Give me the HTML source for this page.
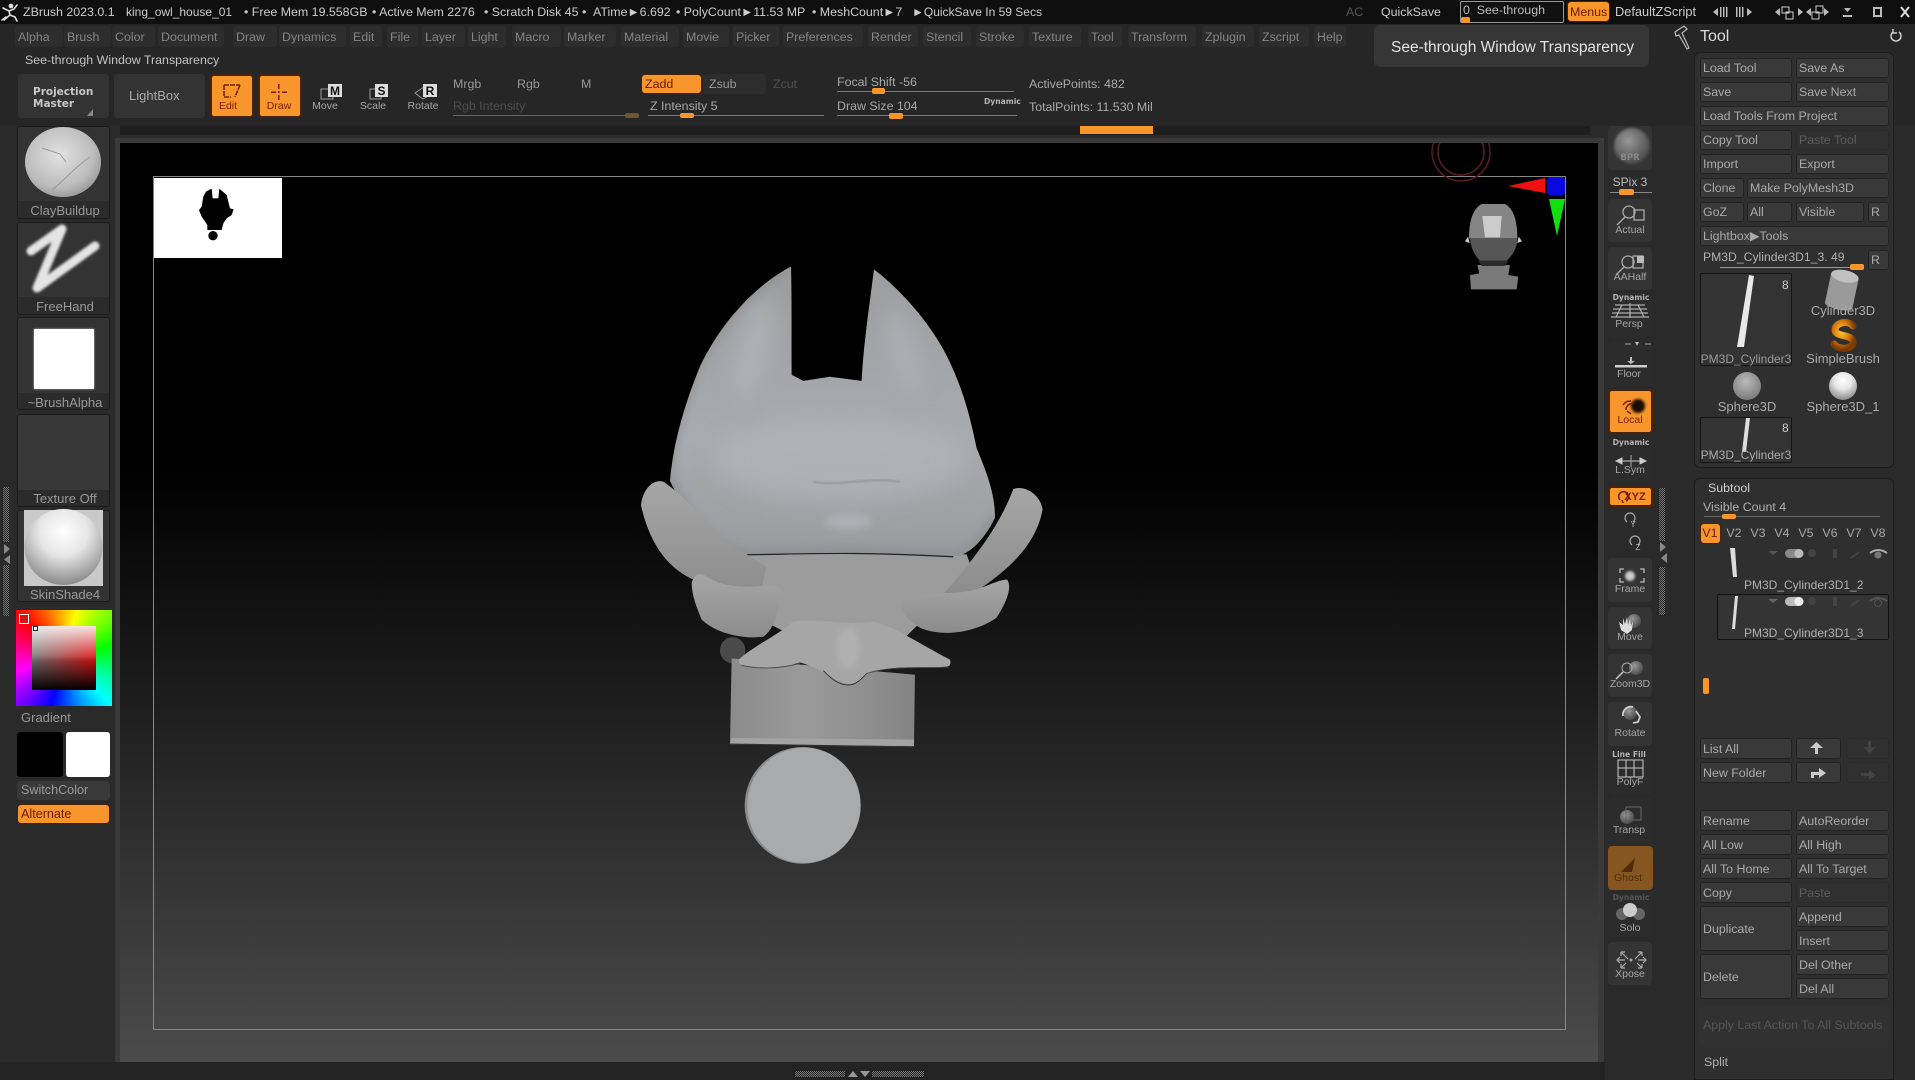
<!DOCTYPE html>
<html><head><meta charset="utf-8"><title>ZBrush</title>
<style>
html,body{margin:0;padding:0;background:#282828}
#r{position:relative;width:1915px;height:1080px;overflow:hidden;background:#2a2a2a;font:12.4px "Liberation Sans",sans-serif;color:#a8a8a8}
#r div{position:absolute;box-sizing:border-box}
.t{position:absolute;white-space:pre;line-height:16px;margin-top:-8px;z-index:2}
.c{transform:translateX(-50%)}
.b{background:#393939;border:1px solid #222;border-radius:3px;color:#aaa;display:flex;align-items:center;padding-left:2px;white-space:pre;line-height:16px}
.d{background:#303030;border-color:#2a2a2a;color:#5c5c5c}
.m{background:#2d2d2d;height:21px;top:26px;border-radius:3px;color:#858585;display:flex;align-items:center;padding-left:3px;white-space:pre}
.o{background:#f8952b;border:2px solid #4a2205;border-radius:4px;color:#7a1c00}
.s{background:#343434;border-radius:4px;width:44px;left:1608px}
.n{background:#2c2c2c;border-radius:4px;width:44px;left:1608px}
.l{color:#a6a6a6;font-size:10.5px}
.th{background:#333;border:1px solid #1a1a1a;border-radius:3px;left:17px;width:93px}
.lb{color:#999;font-size:13px}
.q{background-color:#333;background-image:repeating-conic-gradient(#777 0 25%,#222 0 50%);background-size:2px 2px}
.bd{font:bold 7.6px "DejaVu Sans",sans-serif;line-height:16px;color:#b5b5b5}
.k{font-weight:bold;font-size:12px;color:#111}
#ov{position:absolute;left:0;top:0;z-index:1}
</style></head><body><div id="r">

<!-- bars -->
<div style="left:0;top:0;width:1915px;height:24px;background:#0f0f0f"></div>
<div style="left:0;top:24px;width:1915px;height:102px;background:#262626"></div>

<span class="t" style="left:23px;top:12px;color:#ccc">ZBrush 2023.0.1</span>
<span class="t" style="left:126px;top:12px;color:#ccc;font-size:12px">king_owl_house_01</span>
<span class="t" style="left:244px;top:12px;color:#ccc">• Free Mem 19.558GB</span>
<span class="t" style="left:372px;top:12px;color:#ccc">• Active Mem 2276</span>
<span class="t" style="left:484px;top:12px;color:#ccc">• Scratch Disk 45 •</span>
<span class="t" style="left:593px;top:12px;color:#ccc">ATime►6.692</span>
<span class="t" style="left:676px;top:12px;color:#ccc">• PolyCount►11.53 MP</span>
<span class="t" style="left:812px;top:12px;color:#ccc">• MeshCount►7</span>
<span class="t" style="left:912px;top:12px;color:#ccc;font-size:12px">►QuickSave In 59 Secs</span>
<span class="t" style="left:1346px;top:12px;color:#555">AC</span>
<span class="t" style="left:1381px;top:12px;color:#ccc">QuickSave</span>
<div style="left:1460px;top:1px;width:104px;height:22px;border:1px solid #999;border-radius:2px;background:#111"></div>
<div style="left:1461px;top:17px;width:9px;height:6px;background:#f8952b;border-radius:2px"></div>
<span class="t" style="left:1463px;top:10px;color:#bbb">0  See-through</span>
<div class="o" style="left:1567px;top:1px;width:43px;height:21px;border-width:1px"></div>
<span class="t" style="left:1570px;top:12px;color:#6b1a00">Menus</span>
<span class="t" style="left:1615px;top:12px;color:#ccc;font-size:12.800px">DefaultZScript</span>

<!-- menu -->
<div class="m" style="left:15px;width:48px">Alpha</div>
<div class="m" style="left:64px;width:47px">Brush</div>
<div class="m" style="left:112px;width:43px">Color</div>
<div class="m" style="left:158px;width:66px">Document</div>
<div class="m" style="left:233px;width:44px">Draw</div>
<div class="m" style="left:279px;width:67px">Dynamics</div>
<div class="m" style="left:350px;width:32px">Edit</div>
<div class="m" style="left:387px;width:31px">File</div>
<div class="m" style="left:422px;width:43px">Layer</div>
<div class="m" style="left:468px;width:38px">Light</div>
<div class="m" style="left:512px;width:49px">Macro</div>
<div class="m" style="left:564px;width:52px">Marker</div>
<div class="m" style="left:621px;width:58px">Material</div>
<div class="m" style="left:683px;width:46px">Movie</div>
<div class="m" style="left:733px;width:46px">Picker</div>
<div class="m" style="left:783px;width:80px">Preferences</div>
<div class="m" style="left:868px;width:50px">Render</div>
<div class="m" style="left:923px;width:48px">Stencil</div>
<div class="m" style="left:976px;width:48px">Stroke</div>
<div class="m" style="left:1029px;width:52px">Texture</div>
<div class="m" style="left:1088px;width:34px">Tool</div>
<div class="m" style="left:1128px;width:68px">Transform</div>
<div class="m" style="left:1202px;width:52px">Zplugin</div>
<div class="m" style="left:1259px;width:50px">Zscript</div>
<div class="m" style="left:1314px;width:32px">Help</div>

<span class="t" style="left:25px;top:60px;color:#c4c4c4">See-through Window Transparency</span>

<!-- tooltip -->
<div style="left:1374px;top:25px;width:275px;height:42px;background:#363636;border-radius:6px"></div>
<span class="t" style="left:1391px;top:48px;font-size:15.500px;color:#e2e2e2">See-through Window Transparency</span>

<!-- Tool title -->
<span class="t" style="left:1700px;top:36.500px;font-size:16px;color:#dcdcdc">Tool</span>

<!-- top tools -->
<div style="left:18px;top:74px;width:91px;height:44px;background:#333;border-radius:4px"></div>
<span class="t bd" style="left:33px;top:92px;font-size:10.500px;color:#c8c8c8">Projection</span>
<span class="t bd" style="left:33px;top:104px;font-size:10.500px;color:#c8c8c8">Master</span>
<div style="left:114px;top:74px;width:91px;height:44px;background:#333;border-radius:4px"></div>
<span class="t" style="left:129px;top:96px;color:#aaa;font-size:13px">LightBox</span>
<div class="o" style="left:210px;top:74px;width:44px;height:44px"></div>
<div class="o" style="left:258px;top:74px;width:44px;height:44px"></div>
<span class="t c" style="left:228px;top:106px;font-size:10.500px;color:#7a1c00">Edit</span>
<span class="t c" style="left:279px;top:106px;font-size:10.500px;color:#7a1c00">Draw</span>
<span class="t c l" style="left:325px;top:106px">Move</span>
<span class="t c l" style="left:373px;top:106px">Scale</span>
<span class="t c l" style="left:423px;top:106px">Rotate</span>
<span class="t c k" style="left:335px;top:90.500px">M</span>
<span class="t c k" style="left:381.500px;top:90.500px">S</span>
<span class="t c k" style="left:430px;top:90.500px">R</span>

<span class="t" style="left:453px;top:84px;color:#999">Mrgb</span>
<span class="t" style="left:517px;top:84px;color:#999">Rgb</span>
<span class="t" style="left:581px;top:84px;color:#999">M</span>
<span class="t" style="left:453px;top:106px;color:#4c4c4c">Rgb Intensity</span>
<div style="left:453px;top:115px;width:180px;height:1px;background:#666"></div>
<div style="left:625px;top:113px;width:14px;height:5px;background:#6b5830;border-radius:2px"></div>
<div class="o" style="left:641px;top:74px;width:61px;height:20px;border-width:1px"></div>
<span class="t" style="left:645px;top:84px;color:#6b1a00">Zadd</span>
<div style="left:703px;top:74px;width:63px;height:20px;background:#2d2d2d;border-radius:3px"></div>
<span class="t" style="left:709px;top:84px;color:#999">Zsub</span>
<span class="t" style="left:773px;top:84px;color:#505050">Zcut</span>
<span class="t" style="left:650px;top:106px;color:#a8a8a8">Z Intensity 5</span>
<div style="left:648px;top:115px;width:176px;height:1px;background:#777"></div>
<div style="left:680px;top:113px;width:14px;height:5px;background:#f8952b;border-radius:2px"></div>
<span class="t" style="left:837px;top:82px;color:#a8a8a8">Focal Shift -56</span>
<div style="left:837px;top:91px;width:177px;height:1px;background:#777"></div>
<div style="left:872px;top:88px;width:13px;height:6px;background:#f8952b;border-radius:2px"></div>
<span class="t" style="left:837px;top:106px;color:#a8a8a8">Draw Size 104</span>
<div style="left:837px;top:115px;width:180px;height:1px;background:#777"></div>
<div style="left:889px;top:113px;width:14px;height:6px;background:#f8952b;border-radius:2px"></div>
<span class="t bd" style="left:984px;top:102px">Dynamic</span>
<span class="t" style="left:1029px;top:84px;color:#aaa">ActivePoints: 482</span>
<span class="t" style="left:1029px;top:107px;color:#aaa">TotalPoints: 11.530 Mil</span>

<div style="left:120px;top:126px;width:1470px;height:9px;background:#1f1f1f"></div>
<div style="left:1080px;top:126px;width:73px;height:8px;background:#f8952b"></div>

<!-- canvas -->
<div style="left:115px;top:138px;width:1489px;height:924px;background:#3a3a3a"></div>
<div style="left:120px;top:143px;width:1478px;height:919px;background:linear-gradient(#000 0,#000 324px,#4b4b4b 100%)"></div>
<div style="left:153px;top:176px;width:1413px;height:854px;border:1px solid #888"></div>
<div style="left:154px;top:178px;width:128px;height:80px;background:#fff"></div>
<div style="left:0;top:1062px;width:1605px;height:18px;background:#232323"></div>
<div class="q" style="left:795px;top:1071px;width:50px;height:6px"></div>
<div class="q" style="left:872px;top:1071px;width:52px;height:6px"></div>

<!-- left column -->
<div class="th" style="top:126px;height:93px"></div><div style="left:18px;top:201px;width:91px;height:17px;background:#2b2b2b"></div>
<div class="th" style="top:222px;height:93px"></div><div style="left:18px;top:297px;width:91px;height:17px;background:#2b2b2b"></div>
<div class="th" style="top:317px;height:93px"></div><div style="left:18px;top:393px;width:91px;height:16px;background:#2b2b2b"></div>
<div style="left:34px;top:329px;width:60px;height:60px;background:#fff;box-shadow:0 0 2px #bbb"></div>
<div class="th" style="top:414px;height:93px;background:#383838"></div><div style="left:18px;top:490px;width:91px;height:16px;background:#2b2b2b"></div>
<div class="th" style="top:510px;height:92px"></div>
<div style="left:24px;top:510px;width:79px;height:76px;background:#c9c9c9"></div>
<span class="t c lb" style="left:65px;top:210.500px">ClayBuildup</span>
<span class="t c lb" style="left:65px;top:306.500px">FreeHand</span>
<span class="t c lb" style="left:65px;top:402.500px">~BrushAlpha</span>
<span class="t c lb" style="left:65px;top:499px">Texture Off</span>
<span class="t c lb" style="left:65px;top:594.500px">SkinShade4</span>
<div style="left:16px;top:610px;width:96px;height:96px;background:conic-gradient(from 315deg,#f00 0,#ff0 60deg,#0f0 120deg,#0ff 180deg,#00f 240deg,#f0f 300deg,#f00 360deg)"></div>
<div style="left:32px;top:626px;width:64px;height:64px;background:linear-gradient(to bottom,rgba(255,255,255,.88) 0,rgba(255,255,255,0) 55%),linear-gradient(to bottom,rgba(0,0,0,0) 45%,#000 100%),linear-gradient(to right,#777,#e01010)"></div>
<div style="left:19px;top:614px;width:10px;height:10px;background:#d01818;border:1px solid #fff"></div>
<div style="left:33px;top:626px;width:5px;height:5px;background:#fff;border:1px solid #222"></div>
<span class="t lb" style="left:21px;top:718px">Gradient</span>
<div style="left:17px;top:732px;width:46px;height:45px;background:#000;border-radius:3px"></div>
<div style="left:66px;top:732px;width:44px;height:45px;background:#fff;border-radius:3px"></div>
<div style="left:17px;top:781px;width:93px;height:19px;background:#393939;border-radius:3px"></div>
<span class="t lb" style="left:21px;top:790px;font-size:12.600px">SwitchColor</span>
<div class="o" style="left:17px;top:804px;width:93px;height:20px;border-width:1px"></div>
<span class="t" style="left:21px;top:814px;color:#6b1a00;font-size:12.600px">Alternate</span>
<div class="q" style="left:3px;top:487px;width:6px;height:55px"></div>
<div class="q" style="left:3px;top:565px;width:6px;height:51px"></div>

<!-- right strip buttons -->
<div class="s" style="top:126px;height:44px"></div>
<div class="s" style="top:199px;height:43px"></div>
<div class="s" style="top:247px;height:43px"></div>
<div class="n" style="top:293px;height:45px"></div>
<div class="n" style="top:342px;height:45px"></div>
<div class="o" style="left:1608px;top:389px;width:45px;height:45px"></div>
<div class="n" style="top:448px;height:34px"></div>
<div class="o" style="left:1608px;top:486px;width:45px;height:21px"></div>
<div class="s" style="top:558px;height:44px"></div>
<div class="s" style="top:607px;height:42px"></div>
<div class="s" style="top:654px;height:43px"></div>
<div class="s" style="top:702px;height:44px"></div>
<div class="n" style="top:750px;height:44px"></div>
<div class="n" style="top:798px;height:44px"></div>
<div style="left:1608px;top:846px;width:45px;height:44px;background:#85561f;border-radius:4px"></div>
<div class="n" style="top:893px;height:44px"></div>
<div class="s" style="top:942px;height:43px"></div>
<div class="q" style="left:1659px;top:488px;width:6px;height:53px"></div>
<div class="q" style="left:1659px;top:567px;width:6px;height:48px"></div>

<span class="t c bd" style="left:1630px;top:158px;font-size:8.500px;color:#888">BPR</span>
<span class="t c" style="left:1630px;top:182px;color:#bbb;font-size:12px">SPix 3</span>
<div style="left:1610px;top:192px;width:42px;height:1px;background:#888"></div>
<div style="left:1619px;top:189px;width:15px;height:6px;background:#f8952b;border-radius:2px"></div>
<span class="t c l" style="left:1630px;top:230px">Actual</span>
<span class="t c l" style="left:1630px;top:277px">AAHalf</span>
<span class="t c bd" style="left:1631px;top:298px">Dynamic</span>
<span class="t c l" style="left:1629px;top:324px">Persp</span>
<span class="t c l" style="left:1629px;top:374px">Floor</span>
<span class="t c l" style="left:1630px;top:420px;color:#7a1c00">Local</span>
<span class="t c bd" style="left:1631px;top:443px">Dynamic</span>
<span class="t c l" style="left:1630px;top:470px">L.Sym</span>
<span class="t c" style="left:1635px;top:497px;color:#7a1c00;font-size:11px;font-weight:bold">XYZ</span>
<span class="t c" style="left:1633px;top:525px;font-size:8px;color:#bbb">Y</span>
<span class="t c" style="left:1638px;top:548px;font-size:8px;color:#bbb">Z</span>
<span class="t c l" style="left:1630px;top:589px">Frame</span>
<span class="t c l" style="left:1630px;top:637px">Move</span>
<span class="t c l" style="left:1630px;top:684px">Zoom3D</span>
<span class="t c l" style="left:1630px;top:733px">Rotate</span>
<span class="t c bd" style="left:1629px;top:755px">Line Fill</span>
<span class="t c l" style="left:1630px;top:782px">PolyF</span>
<span class="t c l" style="left:1629px;top:830px">Transp</span>
<span class="t c l" style="left:1628px;top:878px;color:#4e2c0c">Ghost</span>
<span class="t c bd" style="left:1631px;top:898px;color:#555">Dynamic</span>
<span class="t c l" style="left:1630px;top:928px">Solo</span>
<span class="t c l" style="left:1630px;top:974px">Xpose</span>

<!-- Tool panel -->
<div style="left:1694px;top:52px;width:200px;height:416px;background:#2f2f2f;border:1px solid #1d1d1d;border-radius:6px"></div>
<div class="b" style="left:1700px;top:58px;width:92px;height:20px">Load Tool</div>
<div class="b" style="left:1796px;top:58px;width:93px;height:20px">Save As</div>
<div class="b" style="left:1700px;top:82px;width:92px;height:20px">Save</div>
<div class="b" style="left:1796px;top:82px;width:93px;height:20px">Save Next</div>
<div class="b" style="left:1700px;top:106px;width:189px;height:20px">Load Tools From Project</div>
<div class="b" style="left:1700px;top:130px;width:92px;height:20px">Copy Tool</div>
<div class="b d" style="left:1796px;top:130px;width:93px;height:20px">Paste Tool</div>
<div class="b" style="left:1700px;top:154px;width:92px;height:20px">Import</div>
<div class="b" style="left:1796px;top:154px;width:93px;height:20px">Export</div>
<div class="b" style="left:1700px;top:178px;width:44px;height:20px">Clone</div>
<div class="b" style="left:1747px;top:178px;width:142px;height:20px">Make PolyMesh3D</div>
<div class="b" style="left:1700px;top:202px;width:44px;height:20px">GoZ</div>
<div class="b" style="left:1747px;top:202px;width:45px;height:20px">All</div>
<div class="b" style="left:1796px;top:202px;width:68px;height:20px">Visible</div>
<div class="b" style="left:1868px;top:202px;width:21px;height:20px">R</div>
<div class="b" style="left:1700px;top:226px;width:189px;height:20px">Lightbox▶Tools</div>
<span class="t" style="left:1703px;top:257px;color:#b0b0b0;font-size:12.200px">PM3D_Cylinder3D1_3. 49</span>
<div style="left:1720px;top:267px;width:135px;height:1px;background:#999"></div>
<div style="left:1850px;top:264px;width:14px;height:6px;background:#f8952b;border-radius:2px"></div>
<div class="b" style="left:1868px;top:250px;width:21px;height:20px">R</div>
<div style="left:1700px;top:273px;width:92px;height:93px;background:#333;border:1px solid #151515;border-radius:2px"></div>
<div style="left:1700px;top:417px;width:92px;height:46px;background:#333;border:1px solid #151515;border-radius:2px"></div>
<span class="t" style="left:1782px;top:285px;color:#ccc;font-size:12px">8</span>
<span class="t" style="left:1782px;top:428px;color:#ccc;font-size:12px">8</span>
<span class="t c" style="left:1746px;top:359px;color:#999;font-size:12px">PM3D_Cylinder3</span>
<span class="t c" style="left:1843px;top:311px;color:#aaa;font-size:13px">Cylinder3D</span>
<span class="t c" style="left:1843px;top:359px;color:#aaa;font-size:13px">SimpleBrush</span>
<span class="t c" style="left:1747px;top:407px;color:#aaa;font-size:13px">Sphere3D</span>
<span class="t c" style="left:1843px;top:407px;color:#aaa;font-size:13px">Sphere3D_1</span>
<span class="t c" style="left:1746px;top:455px;color:#aaa;font-size:12px">PM3D_Cylinder3</span>

<!-- Subtool -->
<div style="left:1694px;top:478px;width:200px;height:602px;background:#2f2f2f;border:1px solid #1d1d1d;border-radius:6px 6px 0 0"></div>
<span class="t" style="left:1708px;top:488px;color:#d0d0d0">Subtool</span>
<span class="t" style="left:1703px;top:507px;color:#b0b0b0">Visible Count 4</span>
<div style="left:1704px;top:516px;width:176px;height:1px;background:#666"></div>
<div style="left:1722px;top:514px;width:14px;height:5px;background:#f8952b;border-radius:2px"></div>
<div class="o" style="left:1700px;top:523px;width:21px;height:21px;border-width:1px"></div>
<span class="t c" style="left:1710px;top:533px;color:#6b1a00">V1</span>
<span class="t c" style="left:1734px;top:533px">V2</span>
<span class="t c" style="left:1758px;top:533px">V3</span>
<span class="t c" style="left:1782px;top:533px">V4</span>
<span class="t c" style="left:1806px;top:533px">V5</span>
<span class="t c" style="left:1830px;top:533px">V6</span>
<span class="t c" style="left:1854px;top:533px">V7</span>
<span class="t c" style="left:1878px;top:533px">V8</span>
<div style="left:1717px;top:594px;width:172px;height:46px;background:#343434;border:1px solid #111;border-radius:2px"></div>
<span class="t" style="left:1744px;top:585px;color:#b0b0b0;font-size:12px">PM3D_Cylinder3D1_2</span>
<span class="t" style="left:1744px;top:633px;color:#b0b0b0;font-size:12px">PM3D_Cylinder3D1_3</span>
<div style="left:1703px;top:678px;width:6px;height:16px;background:#f8952b;border-radius:2px"></div>
<div class="b" style="left:1700px;top:738px;width:92px;height:21px">List All</div>
<div class="b" style="left:1796px;top:738px;width:45px;height:21px"></div>
<div class="b d" style="left:1846px;top:738px;width:43px;height:21px"></div>
<div class="b" style="left:1700px;top:762px;width:92px;height:21px">New Folder</div>
<div class="b" style="left:1796px;top:762px;width:45px;height:21px"></div>
<div class="b d" style="left:1846px;top:762px;width:43px;height:21px"></div>
<div class="b" style="left:1700px;top:810px;width:92px;height:21px">Rename</div>
<div class="b" style="left:1796px;top:810px;width:93px;height:21px">AutoReorder</div>
<div class="b" style="left:1700px;top:834px;width:92px;height:21px">All Low</div>
<div class="b" style="left:1796px;top:834px;width:93px;height:21px">All High</div>
<div class="b" style="left:1700px;top:858px;width:92px;height:21px">All To Home</div>
<div class="b" style="left:1796px;top:858px;width:93px;height:21px">All To Target</div>
<div class="b" style="left:1700px;top:882px;width:92px;height:21px">Copy</div>
<div class="b d" style="left:1796px;top:882px;width:93px;height:21px">Paste</div>
<div class="b" style="left:1700px;top:906px;width:92px;height:45px">Duplicate</div>
<div class="b" style="left:1796px;top:906px;width:93px;height:21px">Append</div>
<div class="b" style="left:1796px;top:930px;width:93px;height:21px">Insert</div>
<div class="b" style="left:1700px;top:954px;width:92px;height:45px">Delete</div>
<div class="b" style="left:1796px;top:954px;width:93px;height:21px">Del Other</div>
<div class="b" style="left:1796px;top:978px;width:93px;height:21px">Del All</div>
<div style="left:1699px;top:1007px;width:190px;height:39px;background:#313131;border-radius:3px"></div>
<span class="t" style="left:1703px;top:1025px;color:#555">Apply Last Action To All Subtools</span>
<span class="t" style="left:1704px;top:1062px;color:#b0b0b0">Split</span>

<svg id="ov" width="1915" height="1080" viewBox="0 0 1915 1080" xmlns="http://www.w3.org/2000/svg">
<defs>
<filter id="bl1" x="-30%" y="-30%" width="160%" height="160%"><feGaussianBlur stdDeviation="1.300"/></filter>
<filter id="bl8" x="-60%" y="-60%" width="220%" height="220%"><feGaussianBlur stdDeviation="30"/></filter>
<filter id="bl4" x="-60%" y="-60%" width="220%" height="220%"><feGaussianBlur stdDeviation="9"/></filter>
<radialGradient id="gs" cx=".45" cy=".4" r=".7"><stop offset="0" stop-color="#e2e2e2"/><stop offset=".65" stop-color="#bcbcbc"/><stop offset="1" stop-color="#8a8a8a"/></radialGradient>
<radialGradient id="gs2" cx=".5" cy=".3" r=".7"><stop offset="0" stop-color="#fff"/><stop offset=".45" stop-color="#e6e6e6"/><stop offset="1" stop-color="#8a8a8a"/></radialGradient>
<radialGradient id="gs3" cx=".45" cy=".35" r=".7"><stop offset="0" stop-color="#bbb"/><stop offset="1" stop-color="#777"/></radialGradient>
<radialGradient id="gb" cx=".4" cy=".35" r=".7"><stop offset="0" stop-color="#999"/><stop offset="1" stop-color="#444"/></radialGradient>
<radialGradient id="go" cx=".4" cy=".35" r=".7"><stop offset="0" stop-color="#fc3"/><stop offset=".6" stop-color="#d67a10"/><stop offset="1" stop-color="#7a3c00"/></radialGradient>
<linearGradient id="gh" x1="0" y1="0" x2="0" y2="1"><stop offset="0" stop-color="#9b9da0"/><stop offset=".6" stop-color="#a8abb0"/><stop offset="1" stop-color="#9a9b9e"/></linearGradient>
<linearGradient id="gc" x1="0" y1="0" x2="1" y2="0"><stop offset="0" stop-color="#8b8b8b"/><stop offset=".4" stop-color="#9a9a9a"/><stop offset=".75" stop-color="#8e8e8e"/><stop offset="1" stop-color="#848484"/></linearGradient>
<linearGradient id="gw" x1="0" y1="0" x2="0" y2="1"><stop offset="0" stop-color="#a6a6a7"/><stop offset="1" stop-color="#8c8c8c"/></linearGradient>
<clipPath id="cv"><rect x="120" y="143" width="1478" height="60"/></clipPath>
<clipPath id="domec"><path d="M573 65C576 150 574 260 575 330L610 345 690 335 785 345C790 260 810 150 822 72 900 120 1000 210 1050 300 1090 370 1110 430 1130 510 1160 570 1185 620 1185 680 1150 740 1100 775 1060 775L750 768 450 772C360 760 260 680 210 590 220 500 250 410 300 310 370 190 480 105 573 65Z"/></clipPath>
</defs>

<!-- logo -->
<g stroke="#ddd" stroke-width="1.600" fill="none" stroke-linecap="round"><path d="M3 8l6 3 5-2 3-4M9 11l1 4-6 5M10 15l5 2 2 4M2 20l4-3"/><circle cx="11" cy="6" r="1.600" fill="#ddd"/></g>

<!-- top-right icons -->
<g fill="#bbb">
<path d="M1713 12l5-4v8zM1752 12l-5-4v8zM1775 12l5-4v8zM1803 12l-5-4v8zM1806 12l5-4v8zM1829 12l-5-4v8z"/>
<path d="M1720 7h1.500v10H1720zM1723 7h1.500v10H1723zM1726 7h1.500v10H1726zM1736 7h1.500v10H1736zM1739 7h1.500v10H1739zM1742 7h1.500v10H1742z"/>
<rect x="1843" y="15" width="9" height="2"/>
<path d="M1844 8h7l-3.500 4z"/>
<path d="M1873 7h9v10h-9zM1875 9v6h5V9z" fill-rule="evenodd"/>
</g>
<g stroke="#ccc" fill="none"><path d="M1782 7h7v6h-7zM1786 12h7v7h-7zM1812 12h7v7h-7zM1816 6h7v7h-7z"/></g>
<path d="M1901 7l8 10M1909 7l-8 10" stroke="#ddd" stroke-width="2"/>
<!-- Tool icons -->
<path d="M1675 32l9-6 3 3-5 4 7 15-2 1-8-14-3 1z" fill="none" stroke="#bbb" stroke-width="1.200"/>
<path d="M1893 32a5 5 0 1 0 6 0M1893 29v4h4" fill="none" stroke="#ccc" stroke-width="1.500"/>

<!-- toolbar icons -->
<g fill="none" stroke="#7a1c00" stroke-width="1.500"><path d="M224 85h16M224 85v12M224 97h7M240 85l-5 12" stroke-dasharray="5 1"/></g>
<g fill="#7a1c00"><rect x="278" y="84" width="1.500" height="5"/><rect x="278" y="95" width="1.500" height="5"/><rect x="271" y="91.500" width="5" height="1.500"/><rect x="282" y="91.500" width="5" height="1.500"/><rect x="278" y="91" width="1.500" height="2"/></g>
<g fill="none" stroke="#999"><rect x="321" y="89" width="12" height="10"/><rect x="370" y="89" width="11" height="10"/><path d="M415 93l9-6 6 8-7 4z"/></g>
<g fill="#ddd"><rect x="328" y="84" width="14" height="13"/><rect x="375" y="84" width="13" height="13"/><rect x="423" y="84" width="14" height="13"/></g>
<path d="M87 116h6v-7z" fill="#888"/>

<!-- thumbnails -->
<ellipse cx="63" cy="162" rx="38" ry="35" fill="url(#gs)"/>
<path d="M42 148l18 6 6 8M52 190c15-12 25-25 38-33" stroke="#9a9a9a" stroke-width="1" fill="none"/>
<path d="M31 251L62 229 37 288 95 246" stroke="#e4e4e4" stroke-width="9" fill="none" stroke-linecap="round" stroke-linejoin="round" filter="url(#bl1)"/>
<ellipse cx="63.500" cy="547" rx="39" ry="38" fill="url(#gs2)"/>

<!-- preview silhouette -->
<g transform="translate(120 130) scale(.3333)" fill="#000"><path d="M258 185L275 176 278 205H295L298 176 320 195 330 235 341 238 335 255 320 265 310 280 305 300H262V285L245 260 237 240 245 230 250 200Z"/><circle cx="279" cy="317" r="14"/></g>

<!-- red circle -->
<g clip-path="url(#cv)" fill="none" stroke="#5a1e22" stroke-width="1.500"><circle cx="1461" cy="152" r="29"/><circle cx="1461" cy="152" r="23"/></g>

<!-- gizmo -->
<path d="M1508 186L1545 178V193Z" fill="#f01010"/>
<rect x="1547" y="177" width="18" height="18" rx="3" fill="#0808e0"/>
<path d="M1549 199H1565L1557 236Z" fill="#10e010"/>

<!-- head gizmo -->
<g transform="translate(1400 130) scale(.3333)">
<path d="M204 320l-9 14 14 5zM356 320l10 14-14 5z" fill="#ccc"/>
<path d="M245 222H315C340 235 352 270 352 325H207C207 270 220 235 245 222Z" fill="#858585"/>
<path d="M247 258H305L300 322H255Z" fill="#ccc"/>
<path d="M210 325H352C352 350 340 375 320 392H240C222 375 212 350 210 325Z" fill="#565656"/>
<path d="M232 405H330L325 435 355 440 350 478H213L210 435 238 430Z" fill="#7a7a7a"/>
<path d="M235 392H325L315 408H245Z" fill="#2c2c2c"/>
</g>

<!-- mesh -->
<g transform="translate(600 240) scale(.3333 .4082)">
<ellipse cx="398" cy="1005" rx="38" ry="32" fill="#4a4a4a"/>
<path d="M395 1025L945 1065 942 1240 390 1235Z" fill="url(#gc)"/>
<path d="M395 1220L942 1224 942 1240 390 1235Z" fill="#a3a3a3"/>
<path d="M388 1235L942 1242" stroke="#333" stroke-width="3"/>
<ellipse cx="608" cy="1385" rx="174" ry="143" fill="#8a8a8a"/>
<ellipse cx="612" cy="1385" rx="170" ry="141" fill="#a9aaac"/>

<!-- lower face -->
<path d="M380 760L1100 770 1130 840 1000 905 920 970 580 970 470 925 400 850Z" fill="#9c9c9d"/>
<!-- dome -->
<path d="M573 65C576 150 574 260 575 330L610 345 690 335 785 345C790 260 810 150 822 72 900 120 1000 210 1050 300 1090 370 1110 430 1130 510 1160 570 1185 620 1185 680 1150 740 1100 775 1060 775L750 768 450 772C360 760 260 680 210 590 220 500 250 410 300 310 370 190 480 105 573 65Z" fill="url(#gh)"/>
<g clip-path="url(#domec)">
<ellipse cx="460" cy="270" rx="50" ry="130" fill="#b3b6bb" opacity=".7" filter="url(#bl8)" transform="rotate(20 460 270)"/>
<ellipse cx="910" cy="270" rx="45" ry="110" fill="#b3b6bb" opacity=".6" filter="url(#bl8)" transform="rotate(-20 910 270)"/>
<ellipse cx="720" cy="540" rx="380" ry="100" fill="#b2b5bc" opacity=".7" filter="url(#bl8)"/>
<path d="M640 592C720 605 800 580 900 592" stroke="#9a9ca0" stroke-width="6" fill="none" filter="url(#bl1)"/>
<ellipse cx="745" cy="690" rx="70" ry="18" fill="#b5b7bd" opacity=".7" filter="url(#bl4)"/>
<path d="M210 590C260 680 360 770 450 772L750 768 1060 775C1100 775 1150 740 1185 680" stroke="#808184" stroke-width="34" fill="none" opacity=".35" filter="url(#bl4)"/>
<path d="M210 590C220 500 250 410 300 310 370 190 480 105 573 65" stroke="#808184" stroke-width="24" fill="none" opacity=".3" filter="url(#bl4)"/>
</g>
<path d="M440 771C600 770 750 762 1060 776" stroke="#222" stroke-width="3" fill="none"/>
<!-- whiskers -->
<path d="M123 650C128 610 160 585 190 592 260 630 340 710 400 750L500 800 480 870 290 835C210 810 150 750 123 650Z" fill="url(#gw)"/>
<path d="M1030 868C1090 810 1190 720 1240 610 1270 600 1320 620 1328 660 1310 740 1240 800 1130 860Z" fill="url(#gw)"/>
<!-- lower wings -->
<path d="M275 840C285 815 300 812 330 830 400 860 470 845 530 848 550 860 555 870 540 885 530 920 520 955 490 972 430 978 350 965 305 930 290 900 275 870 275 840Z" fill="url(#gw)"/>
<path d="M905 880C950 860 1040 870 1110 860 1160 850 1200 830 1222 832 1235 850 1225 880 1190 925 1130 960 1030 975 960 950 920 930 900 910 905 880Z" fill="url(#gw)"/>
<!-- beak -->
<path d="M420 1025C470 990 530 970 580 935 640 925 720 945 820 935 880 945 960 990 1050 1028 1054 1038 1050 1045 1040 1045 980 1050 890 1040 800 1060 780 1078 765 1088 745 1088 710 1085 670 1050 600 1035 540 1050 470 1050 425 1040 415 1035 415 1030 420 1025Z" fill="#a6a6a7"/>
<path d="M425 1042C480 1052 540 1050 600 1037M800 1062C880 1042 960 1050 1045 1047" stroke="#444" stroke-width="2" fill="none"/>
<ellipse cx="745" cy="1000" rx="35" ry="50" fill="#b0b0b1" filter="url(#bl4)"/>
<path d="M670 1055C700 1080 720 1090 745 1090 765 1090 780 1080 800 1062" stroke="#222" stroke-width="2" fill="none"/>
</g>

<!-- left/right handle arrows -->
<g fill="#888"><path d="M4 544l6 5-6 5zM10 555v9l-6-4.500zM1660 542l6 5-6 5zM1667 553v10l-6-5z"/></g>
<path d="M848 1077l5-6 5 6zM860 1071h10l-5 6z" fill="#999"/>

<!-- right strip icons -->
<circle cx="1632" cy="146" r="18" fill="url(#gb)" filter="url(#bl1)"/>
<g fill="none" stroke="#aaa" stroke-width="1.300">
<circle cx="1629" cy="212" r="6"/><path d="M1625 217l-8 8"/><rect x="1634" y="210" width="10" height="10"/>
<circle cx="1628" cy="262" r="6"/><path d="M1624 267l-8 8"/><rect x="1633" y="256" width="10" height="12"/>
<path d="M1615 305h30M1613 309h34M1612 313h36M1611 317h38M1630 303v15M1622 305l-6 12M1638 305l6 12"/>
</g>
<rect x="1637" y="256" width="7" height="7" fill="#bbb"/>
<path d="M1630 361v-4h2v4h3l-4 3-4-3z" fill="#bbb"/>
<rect x="1615" y="365" width="32" height="2.500" fill="#ccc"/>
<g fill="#666"><rect x="1625" y="343" width="6" height="2"/><rect x="1645" y="343" width="6" height="2"/></g>
<path d="M1635 342l2 4 2-4z" fill="#bbb"/>
<circle cx="1638" cy="406" r="7" fill="#1a0a00" filter="url(#bl1)"/>
<path d="M1626 410a6 6 0 0 1 8-6M1623 405a9 9 0 0 1 8-4M1627 411l4 3" fill="none" stroke="#7a1c00" stroke-width="1.500"/>
<path d="M1616 461h30M1622 458l-6 3 6 3zM1640 458l6 3-6 3z" fill="#ccc" stroke="#ccc"/>
<path d="M1631 455v12" stroke="#aaa"/>
<path d="M1620 500a5 5 0 1 1 6 1M1622 500l1 3" fill="none" stroke="#7a1c00" stroke-width="1.500"/>
<g fill="none" stroke="#aaa" stroke-width="1.200"><path d="M1627 522a5 5 0 1 1 6 0"/><path d="M1632 545a5 5 0 1 1 6 0"/></g>
<g fill="none" stroke="#bbb" stroke-width="1.300"><path d="M1620 573v-4h4M1644 573v-4h-4M1620 578v4h4M1644 578v4h-4"/></g>
<ellipse cx="1630" cy="576" rx="5" ry="5" fill="#ccc" filter="url(#bl1)"/>
<circle cx="1634" cy="621" r="7" fill="url(#gb)"/>
<path d="M1619 622l2 8 6 4 5-4 1-9-2 5-1-7-2 6-1-8-2 7-2-6v7z" fill="#ddd"/>
<circle cx="1636" cy="668" r="7" fill="url(#gb)"/>
<circle cx="1627" cy="668" r="5" fill="none" stroke="#aaa"/><path d="M1623 672l-7 7" stroke="#ccc" stroke-width="1.500"/>
<circle cx="1630" cy="713" r="7" fill="url(#gb)"/>
<path d="M1623 716a8 8 0 0 1 10-9M1636 711l4 6-2 5-5 1" fill="none" stroke="#ccc" stroke-width="1.800"/>
<g fill="none" stroke="#ccc"><rect x="1618" y="760" width="25" height="17"/><path d="M1626 760v17M1634 760v17M1618 768h25"/></g>
<circle cx="1627" cy="817" r="7" fill="url(#gb)"/><rect x="1626" y="807" width="15" height="13" fill="none" stroke="#666"/>
<path d="M1621 872l14-14-3 14z" fill="#4e2c0c"/>
<circle cx="1622" cy="914" r="6" fill="#666"/><circle cx="1639" cy="914" r="6" fill="#666"/><circle cx="1630" cy="910" r="7" fill="#ccc"/>
<g fill="none" stroke="#aaa" stroke-width="1.200"><path d="M1621 952l7 7M1621 952v4M1621 952h4M1642 952l-7 7M1642 952v4M1642 952h-4M1621 968l5-5M1621 968v-4M1621 968h4M1642 968l-5-5M1642 968v-4M1642 968h-4M1617 960h8M1638 960h8M1620 957l-3 3 3 3M1643 957l3 3-3 3"/></g>
<circle cx="1631" cy="960" r="1.500" fill="#aaa"/>

<!-- tool thumbnails -->
<path d="M1749 275L1754 276 1744 347 1737 347Z" fill="#e8e8e8"/>
<g transform="rotate(12 1843 285)"><rect x="1829" y="276" width="28" height="30" fill="#9a9a9a"/><ellipse cx="1843" cy="276" rx="14" ry="6" fill="#c0c0c0"/><ellipse cx="1843" cy="306" rx="14" ry="4" fill="#9a9a9a"/></g>
<path d="M1853 326c-4-6-18-4-18 4 0 7 16 4 18 11 2 8-14 10-19 3" fill="none" stroke="url(#go)" stroke-width="7" stroke-linecap="round"/>
<circle cx="1747" cy="386" r="14" fill="url(#gs3)"/>
<circle cx="1843" cy="386" r="14" fill="url(#gs2)"/>
<path d="M1746 418L1750 418 1746 452 1742 452Z" fill="#ddd"/>

<!-- subtool -->
<path d="M1730 548l5 0 2 29-4 0z" fill="#ddd"/>
<path d="M1735 596l3 0-3 33-3 0z" fill="#ddd"/>
<path d="M1768 551h10l-5 4z" fill="#555"/><rect x="1785" y="549" width="18" height="9" rx="4.500" fill="#888"/><circle cx="1799" cy="553.500" r="4.500" fill="#bbb"/>
<circle cx="1812" cy="553" r="4" fill="#444"/><rect x="1833" y="549" width="4" height="9" fill="#444"/><path d="M1851 558l8-6" stroke="#444" stroke-width="2"/>
<path d="M1870 553q8-6 17 0" fill="none" stroke="#aaa" stroke-width="2"/><circle cx="1878" cy="555" r="3.500" fill="#777"/>
<path d="M1768 599h10l-5 4z" fill="#666"/><rect x="1785" y="597" width="18" height="9" rx="4.500" fill="#bbb"/><circle cx="1799" cy="601.500" r="4.500" fill="#eee"/>
<circle cx="1812" cy="601" r="4" fill="#444"/><rect x="1833" y="597" width="4" height="9" fill="#444"/><path d="M1851 606l8-6" stroke="#444" stroke-width="2"/>
<path d="M1870 601q8-6 17 0" fill="none" stroke="#555" stroke-width="2"/><circle cx="1878" cy="603" r="3.500" fill="none" stroke="#555"/>
<path d="M1823 748l-5 0 0 6-3 0 0-6-5 0 6.500-6z" fill="#ccc"/>
<path d="M1863 747l5 0 0-6 3 0 0 6 5 0-6.500 6z" fill="#444"/>
<path d="M1811 778v-6h8v-4l7 5-7 5v-3h-5v3z" fill="#ccc"/>
<path d="M1861 767v6h8v-3l7 5-7 5v-4h-8z" fill="#444"/>
</svg>
</div></body></html>
